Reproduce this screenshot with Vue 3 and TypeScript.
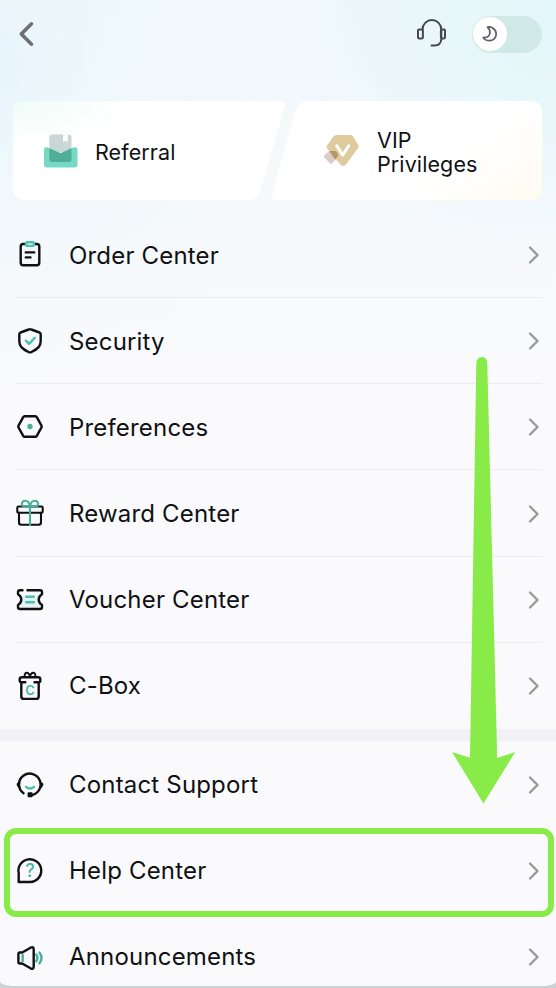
<script setup lang="ts">
type IconName =
  | 'order' | 'security' | 'preferences' | 'reward' | 'voucher'
  | 'cbox' | 'support' | 'help' | 'announce'

interface MenuItem {
  label: string
  icon: IconName
}

const groups: MenuItem[][] = [
  [
    { label: 'Order Center', icon: 'order' },
    { label: 'Security', icon: 'security' },
    { label: 'Preferences', icon: 'preferences' },
    { label: 'Reward Center', icon: 'reward' },
    { label: 'Voucher Center', icon: 'voucher' },
    { label: 'C-Box', icon: 'cbox' },
  ],
  [
    { label: 'Contact Support', icon: 'support' },
    { label: 'Help Center', icon: 'help' },
    { label: 'Announcements', icon: 'announce' },
  ],
]
</script>

<template>
  <div class="screen">
    <main class="sheet">
      <header class="topbar">
        <svg class="back" viewBox="0 0 20 30" aria-hidden="true">
          <path d="M13.5 4.8 3.3 15l10.2 10.2" />
        </svg>
        <div class="actions">
          <svg class="headset" viewBox="0 0 32 30" aria-hidden="true">
            <path d="M6.5 10.5A9.2 9.2 0 0 1 25.3 10.5V20.5Q24.8 26.2 18.5 26.6H15.5" />
            <rect x="2" y="10.6" width="4.9" height="8.8" rx=".8" />
            <rect x="24.9" y="10.6" width="4.1" height="8.8" rx=".8" />
          </svg>
          <div class="toggle">
            <span class="knob">
              <svg viewBox="0 0 18 18" aria-hidden="true">
                <path d="M6.5 2.1C9.8 1.3 15.2 3.6 15.2 9c0 4.1-3.1 6.7-6.7 6.7-2.8 0-5.1-1.2-6.3-3.3 3.5.4 6.2-1.3 6.7-4.3.4-2.4-.7-4.5-2.4-6Z" />
              </svg>
            </span>
          </div>
        </div>
      </header>

      <section class="cards">
        <div class="card referral">
          <svg class="card-icon" viewBox="0 0 36 36" aria-hidden="true">
            <path d="M6.3 3.5a3 3 0 0 1 3-3h10.8v6.8q0 1.1 1 .5l1.4-1.2 1.4 1.2q1 .6 1-.5V.5q3.6 0 3.6 3V18H6.3Z" fill="#c9d7d6" />
            <path d="M1 15.5q0-2.3 2.3-2.3 1.300 0 3 1.100l9.600 4.200q1.800.800 3.600 0l9.300-4.200q1.700-1.100 3-1.100 2.700 0 2.700 2.300V30.500a3 3 0 0 1-3 3H4a3 3 0 0 1-3-3Z" fill="#74d9c5" />
            <path d="m6.300 14.300 9.600 4.200q1.800.800 3.600 0l9-4.200V25a3 3 0 0 1-3 3H9.300a3 3 0 0 1-3-3Z" fill="#50ad98" />
          </svg>
          <span>Referral</span>
        </div>
        <div class="card vip">
          <svg class="card-icon" viewBox="0 0 36 36" aria-hidden="true">
            <path d="M10.500 2.500Q11.500 1 13.300 1h14q1.800 0 2.800 1.500l5.200 8.500q.9 1.500-.2 3L23.200 30.200q-3 3.400-6 0L4.200 14.500q-1.200-1.500-.2-3Z" fill="#dfcc9c" />
            <path d="M5.500 17.800Q6.500 17 7.500 17h4q1.500 0 2.300 1.200l1.200 2.100q.6 1.200-.3 2.300l-5.200 6.600q-1.300 1.300-2.600 0L1.300 23.500q-.9-1.100.1-2.200Z" fill="#dacdc9" />
            <path d="m6.200 17 1-.1h4.300q1.500 0 2.300 1.300l1.200 2.100q.6 1.200-.3 2.300l-2.500 3.100Z" fill="#b99663" />
            <path d="m13.700 11.800 6 9.300 6-9.300" fill="none" stroke="#fff" stroke-width="3" stroke-linecap="round" stroke-linejoin="round" />
          </svg>
          <span>VIP<br />Privileges</span>
        </div>
      </section>

      <nav v-for="(group, g) in groups" :key="g" class="group">
        <a v-for="item in group" :key="item.label" class="row" :class="{ marked: item.icon === 'help' }">
          <svg class="icon" viewBox="0 0 30 30" aria-hidden="true">
            <g v-if="item.icon === 'order'">
              <rect x="5.700" y="4" width="18.600" height="21.300" rx="2.500" />
              <rect class="teal cut" x="11" y="2.200" width="8" height="3.700" rx="1.600" />
              <path d="M10.800 12.400h8.400M10.800 17.400h4.700" />
            </g>
            <g v-else-if="item.icon === 'security'">
              <path d="M13.700 3.500q1.300-.6 2.600 0l8.200 3q1.200.5 1.200 1.700V15c0 5-2.500 7.700-9.200 11q-1.500.8-3 0C6.800 22.700 4.300 20 4.300 15V8.200q0-1.200 1.200-1.700Z" />
              <path class="teal" d="m10.900 14.700 3.200 3.200 5.700-6.200" />
            </g>
            <g v-else-if="item.icon === 'preferences'">
              <path d="M9.700 4.200h10.600q1 0 1.500.9l4.700 8.500q.5.900 0 1.800l-4.700 8.500q-.5.900-1.500.9H9.700q-1 0-1.500-.9l-4.700-8.500q-.5-.9 0-1.800l4.700-8.500q.5-.9 1.500-.9Z" />
              <circle class="dot" cx="15" cy="14.500" r="2.700" />
            </g>
            <g v-else-if="item.icon === 'reward'" class="thin">
              <rect x="2.300" y="7.500" width="25.400" height="6.200" rx="1.200" />
              <path d="M4 13.700V23.500q0 2.200 2.200 2.200h17.600q2.200 0 2.200-2.200v-9.800" />
              <path class="deep" d="M15 8v18M14.800 7.700H9.200C5.500 6.500 6.700 1.800 10 1.800c3 0 4.600 2.700 4.800 5.900Zm.4 0h5.600C24.500 6.500 23.300 1.800 20 1.800c-3 0-4.600 2.700-4.800 5.900Z" />
            </g>
            <g v-else-if="item.icon === 'voucher'">
              <path class="tint" d="M6 10q3 5 0 10v4h18v-4q-3-5 0-10Z" />
              <path d="M7.500 5.200H5Q3 5.200 3 7.200v2q3.300 2 3.300 5.400T3 20v2q0 2 2 2h20q2 0 2-2v-2q-3.300-2-3.300-5.400T27 9.200v-2q0-2-2-2H12.500" />
              <path class="teal" d="M11.200 11.800h7.600M11.200 17.300h7.600" />
            </g>
            <g v-else-if="item.icon === 'cbox'">
              <path d="M6.300 12.500V25.200q0 2.700 2.700 2.700h12q2.700 0 2.700-2.700V12.500" />
              <path d="M10.300 11.300H6.500q-1.800 0-1.800-1.500V8.300Q4.700 6.200 7 6.200h16q2.300 0 2.300 2.100v1.500q0 1.500-1.800 1.500H19.500" />
              <path class="fine" d="M15 5C13.500.6 9.500.6 9.600 5.100M15 5c1.500-4.400 5.500-4.400 5.400.1" />
              <text x="15" y="24.300" font-size="13">C</text>
            </g>
            <g v-else-if="item.icon === 'support'">
              <path d="M8.500 23.200A10.800 10.800 0 1 1 15 25.200" />
              <path d="M4.200 13.500Q2.600 13.500 2.900 15l1.500 2M25.800 13.500q1.600 0 1.300 1.500l-1.500 2" />
              <rect x="12.600" y="22.200" width="4.900" height="5" rx=".8" fill="#101114" stroke="none" />
              <path class="teal" d="M11 16.800q4 3.400 8 0" />
            </g>
            <g v-else-if="item.icon === 'help'">
              <path d="M3.700 26V17A11.400 11.400 0 1 1 15.300 26Z" />
              <text x="15" y="20.800" font-size="18" class="light">?</text>
            </g>
            <g v-else>
              <path d="M3.400 12q0-1.500 1.500-1.500h2.300L15.500 5.700q3.200-1.500 3.200 1.500v17.600q0 3-3.200 1.500L7.200 21.500H4.900Q3.400 21.500 3.400 20Z" />
              <path class="deep" d="M7.700 13v6M21.200 12.500q2.400 3.400 0 6.800M24.500 10.500q4 5.400 0 10.800" />
            </g>
          </svg>
          <span class="label">{{ item.label }}</span>
          <svg class="chevron" viewBox="0 0 12 20" aria-hidden="true">
            <path d="m2 2.500 7.500 7.500L2 17.500" />
          </svg>
        </a>
      </nav>
    </main>

    <svg class="arrow" viewBox="0 0 64 448" aria-hidden="true">
      <path d="M24.300 8Q24.500 1 30 1T35.300 8L45.200 402 63.200 396 31.500 447.500 0 396l18 5.700Z" />
    </svg>
  </div>
</template>

<style>
body {
  background: #cfd0d2;
}
</style>

<style scoped>
.screen {
  position: relative;
  width: 556px;
  height: 988px;
  overflow: hidden;
  font-family: Inter, "Liberation Sans", sans-serif;
  color: #101114;
}
.sheet {
  box-sizing: border-box;
  height: 986px;
  overflow: hidden;
  border-radius: 0 0 12px 12px / 0 0 5px 5px;
  background:
    radial-gradient(ellipse 90px 110px at 0 65px, rgba(230, 244, 255, .65), transparent),
    radial-gradient(ellipse 300px 250px at 556px 20px, rgba(224, 246, 249, .85), transparent),
    radial-gradient(ellipse 300px 380px at 0 20px, rgba(233, 247, 249, .7), transparent),
    linear-gradient(180deg, #f2f8fb 0, #f5f9fc 180px, #fafafd 370px);
}
.topbar {
  display: flex;
  align-items: center;
  justify-content: space-between;
  height: 68px;
  padding: 0 14px 0 18px;
}
.back {
  width: 20px;
  height: 30px;
  fill: none;
  stroke: #6e6f75;
  stroke-width: 3.600;
  stroke-linecap: round;
  stroke-linejoin: round;
}
.actions {
  display: flex;
  align-items: center;
  gap: 24px;
}
.headset {
  width: 32px;
  height: 30px;
  fill: none;
  stroke: #46484c;
  stroke-width: 2;
  stroke-linecap: round;
}
.toggle {
  box-sizing: border-box;
  width: 70px;
  height: 37px;
  padding: 1.500px 1px;
  border-radius: 19px;
  background: #cfe9e7;
}
.knob {
  display: flex;
  align-items: center;
  justify-content: center;
  width: 34px;
  height: 34px;
  border-radius: 50%;
  background: #fff;
}
.knob svg {
  width: 18px;
  height: 18px;
  fill: none;
  stroke: #625f68;
  stroke-width: 1.700;
  stroke-linejoin: round;
}
.cards {
  display: flex;
  height: 99px;
  padding: 33px 14px 12px 13px;
}
.card {
  display: flex;
  align-items: center;
  box-sizing: border-box;
  height: 99px;
  font-size: 21.500px;
  line-height: 24.500px;
  letter-spacing: .1px;
}
.card-icon {
  width: 36px;
  height: 36px;
}
.referral {
  width: 273px;
  padding: 3px 0 0 30px;
  gap: 16px;
  background: radial-gradient(ellipse 120px 45px at 0 0, #effcf7, #fff);
  clip-path: path("M12 0H267Q273.500 0 272 5L247.500 89Q244.500 99 235 99H12Q0 99 0 87V12Q0 0 12 0Z");
}
.vip {
  width: 270px;
  margin-left: -14px;
  padding: 3px 0 0 51px;
  gap: 18px;
  background: linear-gradient(145deg, #fff 65%, #fffbf0);
  clip-path: path("M36 0H258Q270 0 270 12V87Q270 99 258 99H6Q-1.500 99 .5 91L23 11Q26.500 0 36 0Z");
}
.group + .group {
  border-top: 12px solid #f2f2f6;
}
.row {
  display: flex;
  align-items: center;
  position: relative;
  box-sizing: border-box;
  height: 86.170px;
  padding: 0 15px;
}
.group + .group .row {
  padding-top: 1px;
}
.row:not(:last-child)::after {
  content: "";
  position: absolute;
  right: 14px;
  bottom: 0;
  left: 15px;
  height: 1px;
  background: #ececf0;
}
.group + .group .row::after {
  display: none;
}
.marked::before {
  content: "";
  position: absolute;
  inset: .5px 2px -4px 3.500px;
  border: 6px solid #89eb47;
  border-radius: 12px;
}
.icon {
  width: 30px;
  height: 30px;
  fill: none;
  stroke: #101114;
  stroke-width: 2.400;
  stroke-linecap: round;
  stroke-linejoin: round;
}
.icon .teal {
  stroke: #4dbfae;
}
.icon .deep {
  stroke: #46b09c;
}
.icon .cut {
  fill: #f4fbfc;
}
.icon .thin {
  stroke-width: 2.100;
}
.icon .fine {
  stroke-width: 1.900;
}
.icon .dot {
  fill: #46b29e;
  stroke: none;
}
.icon .tint {
  fill: #e4f5f3;
  stroke: none;
}
.icon text {
  fill: #43b7a5;
  stroke: none;
  font-weight: 600;
  text-anchor: middle;
}
.icon .light {
  font-weight: 500;
}
.label {
  flex: 1;
  padding: 1px 0 0 24px;
  font-size: 24px;
  line-height: 30px;
  letter-spacing: .18px;
}
.chevron {
  width: 12px;
  height: 20px;
  margin-right: 1px;
  fill: none;
  stroke: #98989c;
  stroke-width: 2.300;
  stroke-linecap: round;
  stroke-linejoin: round;
}
.arrow {
  position: absolute;
  top: 356px;
  left: 452px;
  width: 64px;
  height: 448px;
  fill: #89eb47;
}
</style>
